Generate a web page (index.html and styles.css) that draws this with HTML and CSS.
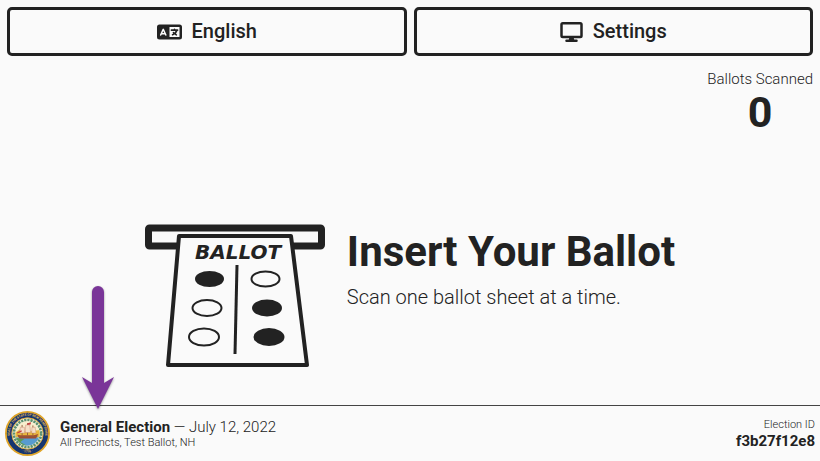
FILE: index.html
```html
<!DOCTYPE html>
<html lang="en">
<head>
<meta charset="utf-8">
<meta name="viewport" content="width=device-width, initial-scale=1">
<title>Insert Your Ballot</title>
<link rel="stylesheet" href="styles.css">
</head>
<body>
<div class="screen">
  <nav class="toolbar">
    <button class="tool" type="button">
      <svg class="icon-language" viewBox="0 0 640 512" aria-hidden="true">
        <path fill-rule="evenodd" d="M64 64h512a64 64 0 0 1 64 64v256a64 64 0 0 1-64 64H64a64 64 0 0 1-64-64V128a64 64 0 0 1 64-64zM320 128v256h256V128zM178 176a20 20 0 0 0-36 0L76 324a20 20 0 0 0 36 17l9-21h78l9 21a20 20 0 0 0 36-17zM160 233l21 47h-42zM448 164a20 20 0 0 1 20 20v4h60a20 20 0 0 1 0 40h-2l-2 5c-9 24-22 47-39 66l3 2 19 11a20 20 0 0 1-21 34l-19-11q-10-6-19-13-18 13-39 22l-4 2a20 20 0 0 1-16-37l4-2q12-5 23-12l-12-12a20 20 0 0 1 28-28l15 15q17-19 26-42H368a20 20 0 0 1 0-40h60v-4a20 20 0 0 1 20-20z"/>
      </svg>
      <span>English</span>
    </button>
    <button class="tool" type="button">
      <svg class="icon-display" viewBox="0 0 576 512" aria-hidden="true">
        <path fill-rule="evenodd" d="M64 0h448a64 64 0 0 1 64 64v288a64 64 0 0 1-64 64H346l11 32h59a32 32 0 0 1 0 64H160a32 32 0 0 1 0-64h59l11-32H64a64 64 0 0 1-64-64V64A64 64 0 0 1 64 0zM64 64v288h448V64z"/>
      </svg>
      <span>Settings</span>
    </button>
  </nav>

  <section class="counter">
    <div class="counter-label">Ballots Scanned</div>
    <div class="counter-value">0</div>
  </section>

  <main class="prompt">
    <svg class="ballot" viewBox="0 0 180 144" role="img" aria-label="Ballot going into the scanner">
      <rect class="slot" x="3.500" y="4" width="173" height="18" rx="1"/>
      <path class="sheet" d="M34 12H146L162 141H23Z"/>
      <text class="sheet-title" x="93" y="35">BALLOT</text>
      <path class="divider" d="M92 41L90 130"/>
      <g class="filled">
        <ellipse cx="64.500" cy="55" rx="14.500" ry="8"/>
        <ellipse cx="122" cy="84" rx="15" ry="8.500"/>
        <ellipse cx="124" cy="113" rx="15.500" ry="9"/>
      </g>
      <g class="empty">
        <ellipse cx="120.500" cy="55" rx="14" ry="7.500"/>
        <ellipse cx="62" cy="84" rx="14.500" ry="8"/>
        <ellipse cx="59" cy="113" rx="15" ry="8.500"/>
      </g>
    </svg>
    <div class="prompt-copy">
      <h1 class="prompt-title">Insert Your Ballot</h1>
      <p class="prompt-text">Scan one ballot sheet at a time.</p>
    </div>
  </main>

  <footer class="election">
    <svg class="seal" viewBox="0 0 100 100" role="img" aria-label="State seal">
      <defs>
        <path id="ring-top" d="M16 70A39.500 39.500 0 1 1 84 70"/>
        <path id="ring-bottom" d="M18 78A43 43 0 0 0 82 78"/>
        <clipPath id="scene"><circle cx="50" cy="50" r="27"/></clipPath>
      </defs>
      <circle cx="50" cy="50" r="48" fill="#17366f" stroke="#e0a52a" stroke-width="4"/>
      <text class="seal-text"><textPath href="#ring-top" startOffset="50%">SEAL OF THE STATE OF NEW HAMPSHIRE</textPath></text>
      <text class="seal-text"><textPath href="#ring-bottom" startOffset="50%">· 1776 ·</textPath></text>
      <circle cx="50" cy="50" r="35" fill="#f2efdc" stroke="#d9a22c" stroke-width="2"/>
      <circle cx="50" cy="50" r="30" fill="none" stroke="#5c9170" stroke-width="6" stroke-dasharray="5 2"/>
      <g clip-path="url(#scene)">
        <rect x="20" y="20" width="60" height="60" fill="#f8efcf"/>
        <path d="M20 50L34 40 47 46 80 42V59H20Z" fill="#e8b93f"/>
        <path d="M20 59H80V80H20Z" fill="#579bcf"/>
        <path d="M20 59L43 62 34 69 53 80H20Z" fill="#5c9b52"/>
        <path d="M27 53L32 61H69L74 51 64 54H34Z" fill="#a34a32"/>
        <path d="M38 31V54M50 27V54M62 32V54M29 57H72" stroke="#8d5a3a" stroke-width="2"/>
        <path d="M34 36H43L44 49H33ZM46 31H55L57 48H45ZM60 36H67L69 49H59Z" fill="#f5dfc8" stroke="#c8846d"/>
        <path d="M50 27L58 25 57 30 50 31ZM27 47L37 43V46L27 50Z" fill="#c53f42"/>
      </g>
    </svg>
    <div class="election-info">
      <div class="election-title"><strong>General Election</strong> — July 12, 2022</div>
      <div class="small">All Precincts, Test Ballot, NH</div>
    </div>
    <div class="election-id">
      <div class="small">Election ID</div>
      <strong class="id-value">f3b27f12e8</strong>
    </div>
    <svg class="arrow" viewBox="0 0 36 128" aria-hidden="true">
      <path d="M12 8A6 6 0 0 1 24 8V99L34 93 18 125 2 93 12 99Z"/>
    </svg>
  </footer>
</div>
</body>
</html>
```
FILE: styles.css
```css
* {
  box-sizing: border-box;
}

body {
  margin: 0;
  background: #fafafa;
  color: #222;
  font-family: Roboto, "Liberation Sans", sans-serif;
  font-weight: 300;
}

.screen {
  display: flex;
  flex-direction: column;
  min-height: 100vh;
}

.toolbar {
  display: grid;
  grid-template-columns: 1fr 1fr;
  gap: 7px;
  padding: 7px 7px 0;
}

.tool {
  display: flex;
  align-items: center;
  justify-content: center;
  gap: 10px;
  padding: 9px;
  border: 3px solid #222;
  border-radius: 5px;
  background: transparent;
  color: inherit;
  font: 500 20px/25px Roboto, "Liberation Sans", sans-serif;
}

.tool svg {
  fill: #222;
}

.icon-language {
  width: 25px;
  height: 20px;
}

.icon-display {
  width: 23px;
  height: 20px;
}

.counter {
  align-self: flex-end;
  padding: 14px 7px 0;
  text-align: center;
}

.counter-label {
  font-size: 15px;
  line-height: 18px;
}

.counter-value {
  font-size: 43px;
  font-weight: 700;
  line-height: 48px;
}

.prompt {
  display: flex;
  flex: 1;
  align-items: center;
  justify-content: center;
  gap: 22px;
  padding: 50px 0 0;
}

.ballot {
  width: 180px;
  height: 144px;
}

.slot,
.sheet,
.empty {
  fill: #fafafa;
  stroke: #222;
}

.slot {
  stroke-width: 7px;
}

.sheet {
  stroke-width: 4px;
  stroke-linejoin: round;
}

.sheet-title {
  fill: #222;
  font: italic 700 20px "DejaVu Sans", sans-serif;
  text-anchor: middle;
}

.divider {
  stroke: #222;
  stroke-width: 3px;
}

.filled {
  fill: #222;
}

.empty {
  stroke-width: 2px;
}

.prompt-copy {
  padding-bottom: 56px;
}

.prompt-title {
  margin: 0;
  font-size: 42px;
  font-weight: 700;
  line-height: 50px;
}

.prompt-text {
  margin: 8px 0 0;
  font-size: 20px;
  line-height: 24px;
}

.election {
  position: relative;
  display: flex;
  align-items: center;
  gap: 10px;
  padding: 5px;
  border-top: 1px solid #444;
}

.seal {
  width: 45px;
  height: 45px;
}

.seal-text {
  fill: #e7bd57;
  font: 700 7px Roboto, sans-serif;
  text-anchor: middle;
}

.election-info {
  flex: 1;
}

.election-title {
  font-size: 15px;
  line-height: 18px;
}

strong {
  font-weight: 700;
}

.small {
  font-size: 11px;
  line-height: 14px;
}

.election-id {
  text-align: right;
}

.id-value {
  display: block;
  font-size: 15px;
  line-height: 18px;
}

.arrow {
  position: absolute;
  bottom: 49px;
  left: 80px;
  width: 36px;
  height: 128px;
  fill: #7a3598;
  filter: drop-shadow(0 1px 1px #0006);
}
```
